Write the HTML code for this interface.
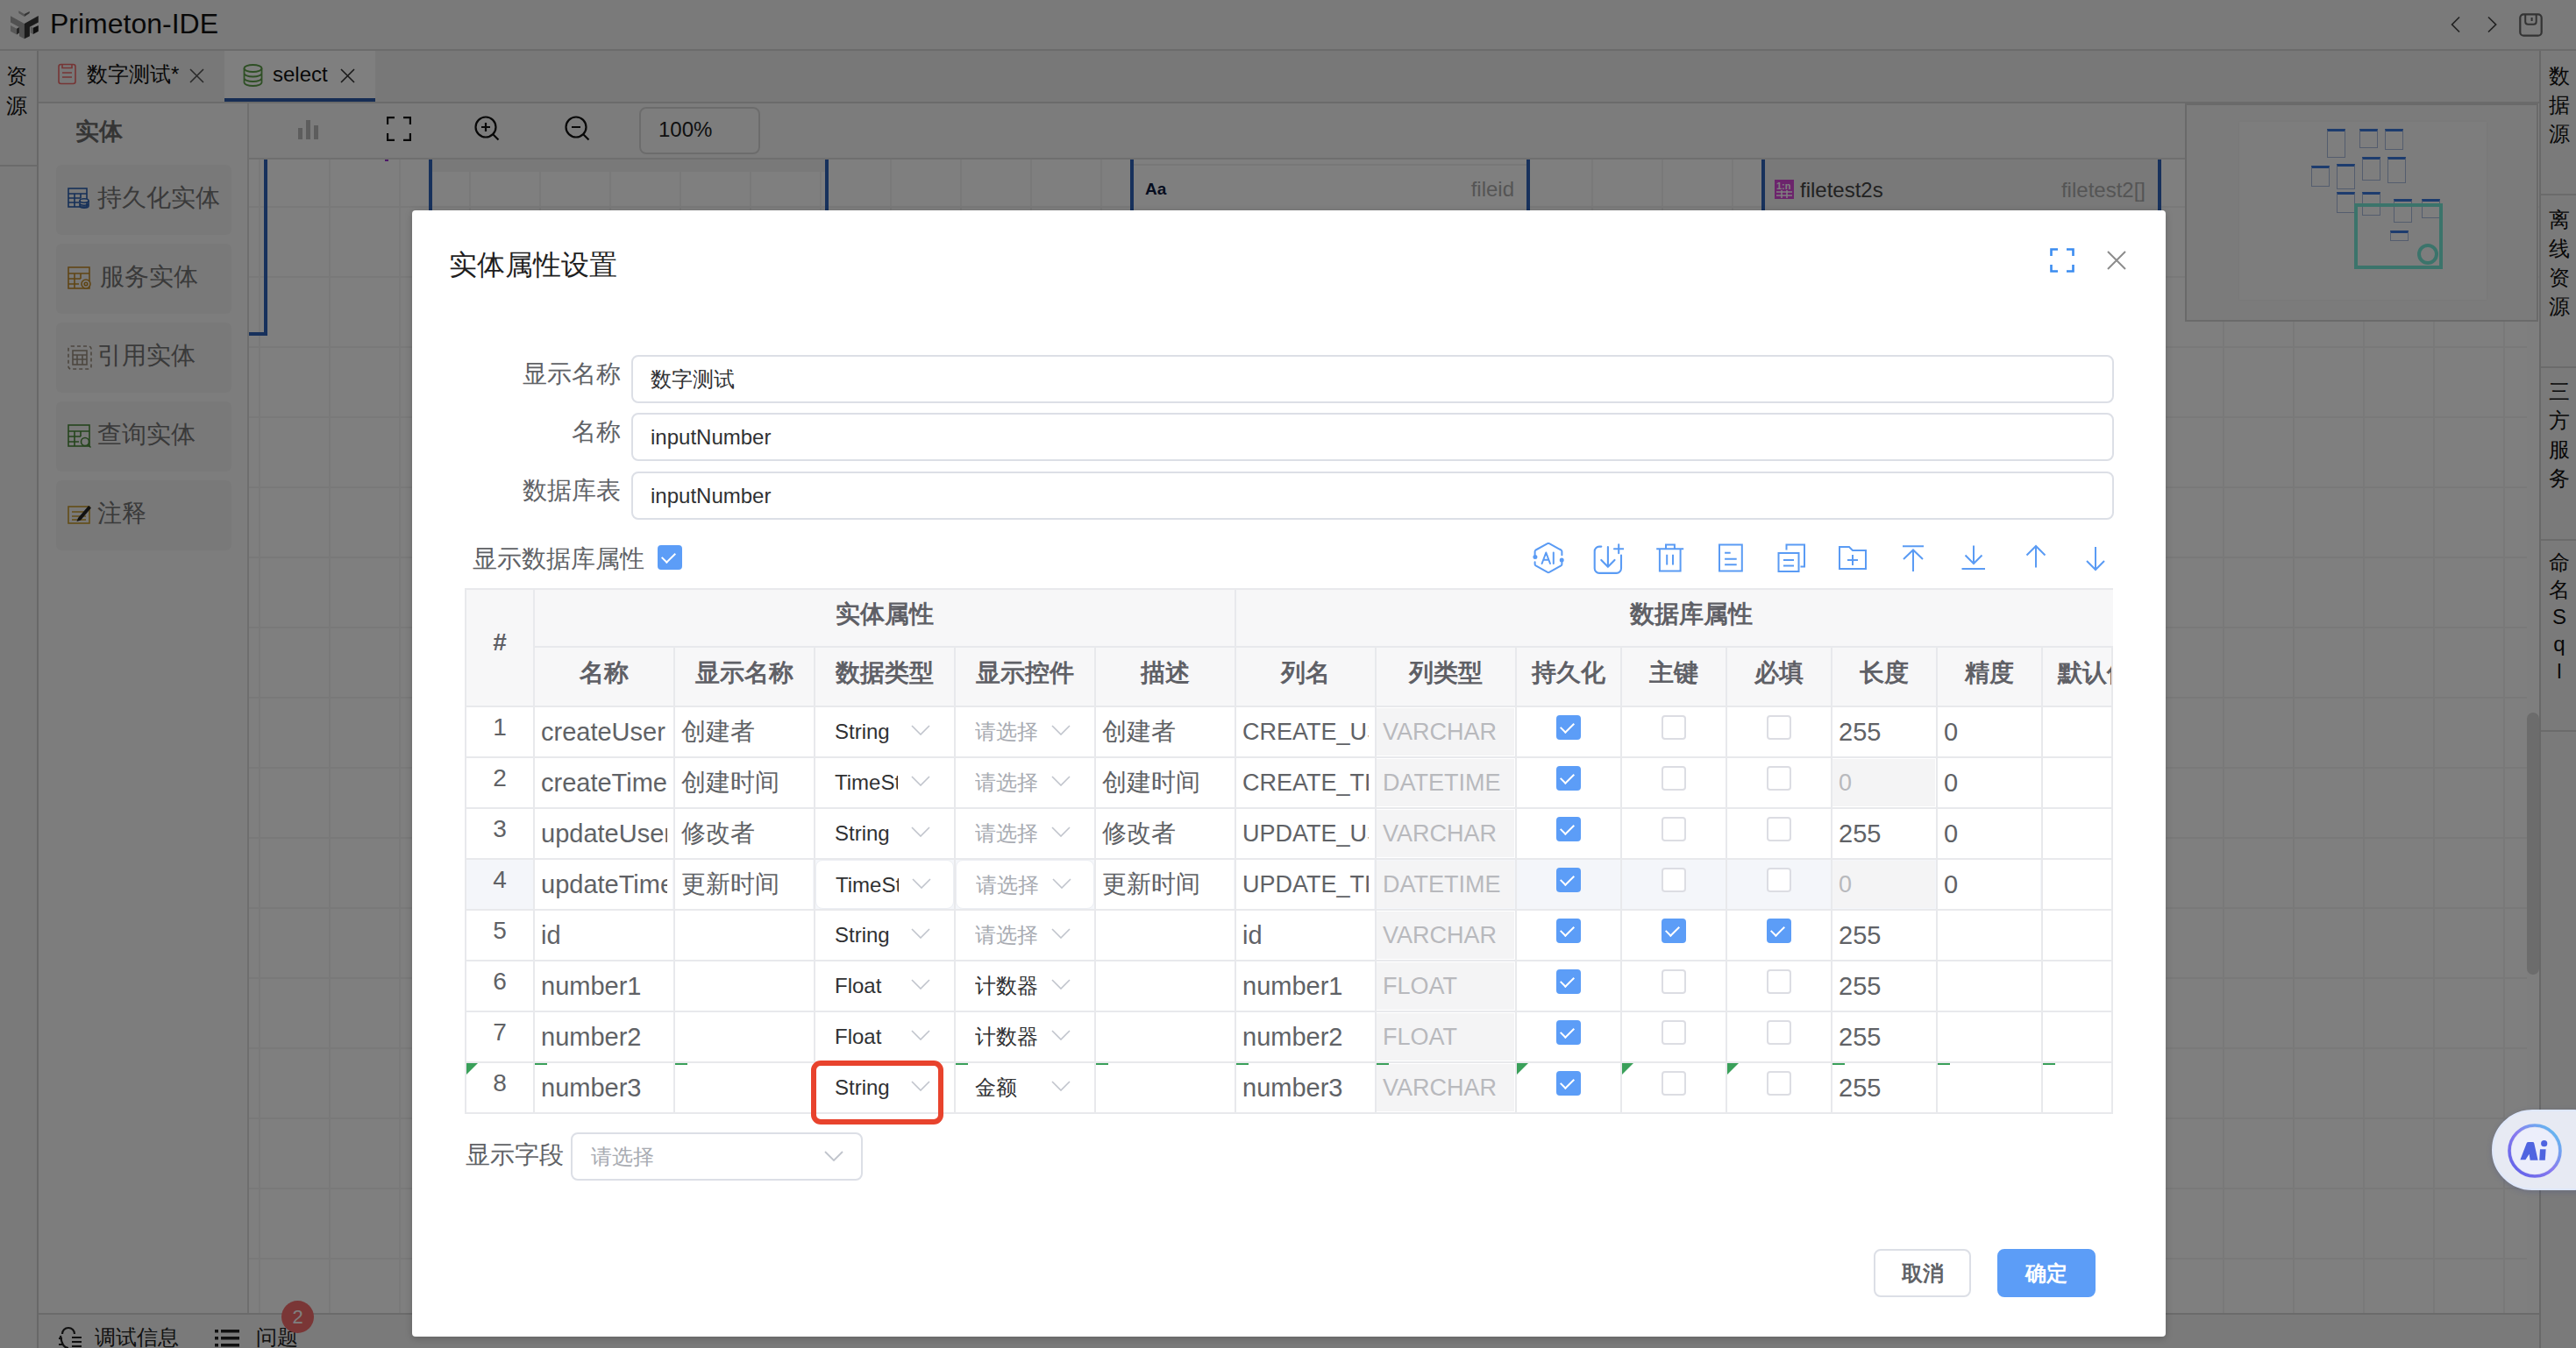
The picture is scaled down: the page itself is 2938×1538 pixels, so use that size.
<!DOCTYPE html>
<html><head><meta charset="utf-8">
<style>
*{box-sizing:border-box;margin:0;padding:0}
html,body{width:2938px;height:1538px;overflow:hidden;background:#fff;font-family:"Liberation Sans",sans-serif;color:#333}
.a{position:absolute}
#bg{position:absolute;left:0;top:0;width:2938px;height:1538px;overflow:hidden}
#topbar{left:0;top:0;width:2938px;height:58px;background:#f4f4f4;border-bottom:2px solid #d6d6d6}
#lstrip{left:0;top:58px;width:44px;height:1480px;background:#f4f4f4;border-right:2px solid #d0d0d0}
#rstrip{left:2896px;top:58px;width:42px;height:1480px;background:#f4f4f4;border-left:2px solid #d0d0d0}
#tabbar{left:44px;top:58px;width:2852px;height:60px;background:#f0f0f0;border-bottom:2px solid #d6d6d6}
#lpanel{left:44px;top:118px;width:240px;height:1380px;background:#fbfbfb;border-right:2px solid #dcdcdc}
#toolbar{left:284px;top:118px;width:2208px;height:64px;background:#f9f9f9;border-bottom:2px solid #dedede}
#canvas{left:284px;top:182px;width:2612px;height:1316px;background-color:#fff;
 background-image:linear-gradient(to right,#f3f3f3 2px,transparent 2px),linear-gradient(to bottom,#f3f3f3 2px,transparent 2px);
 background-size:80px 80px;background-position:11px 53px}
#botbar{left:44px;top:1498px;width:2852px;height:40px;background:#f4f4f4;border-top:2px solid #d6d6d6}
#mask{position:absolute;left:0;top:0;width:2938px;height:1538px;background:rgba(0,0,0,0.5)}
#modal{left:470px;top:240px;width:2000px;height:1285px;background:#fff;border-radius:4px;box-shadow:0 2px 8px rgba(0,0,0,0.2)}
.item{left:20px;width:200px;height:80px;border-radius:6px;background:#f3f3f3;font-size:28px;color:#747474;line-height:32px}
.item span{white-space:nowrap}
.flab{font-size:28px;line-height:40px;color:#606266;text-align:right;white-space:nowrap}
.flab2{font-size:28px;line-height:36px;color:#606266;white-space:nowrap}
.finp{height:55px;border:2px solid #dcdfe6;border-radius:8px;background:#fff;font-size:24px;line-height:51px;color:#303133;padding-left:20px;white-space:nowrap}
.cb{width:28px;height:28px;border:2px solid #dcdde3;border-radius:4px;background:#fff}
.cb.on{background:#5c9df7;border-color:#5c9df7}
.cb.on::after{content:"";position:absolute;left:6px;top:3px;width:7px;height:13px;border-right:2.5px solid #fff;border-bottom:2.5px solid #fff;transform:rotate(45deg)}
#tbl{overflow:hidden}
.gl{background:#e8e9ec}
.hd{font-size:28px;font-weight:bold;color:#5f6066;text-align:center;white-space:nowrap;overflow:hidden}
.num{height:56px;line-height:46px;font-size:28px;color:#606266;text-align:center}
.ctext{height:56px;line-height:56px;font-size:28px;color:#606266;white-space:nowrap;overflow:hidden}
.csel{width:158px;height:56px}
.csel.hov{background:#fff;border:1px solid #eceef3;border-radius:8px}
.csel .st{position:absolute;left:22px;top:0;width:72px;height:56px;line-height:56px;font-size:24px;color:#303133;white-space:nowrap;overflow:hidden}
.csel .st.ph{color:#a8abb2;width:90px}
.csel .arr{position:absolute;left:109px;top:20px}
.cdis{background:#f4f4f5;font-size:27px;line-height:54px;color:#b8b9bd;padding-left:7px;white-space:nowrap;overflow:hidden}
.tri{width:0;height:0;border-top:13px solid #3aa05a;border-right:13px solid transparent}
.fsel{width:333px;height:55px;border:2px solid #dcdfe6;border-radius:8px;background:#fff;font-size:24px;line-height:51px;color:#a8abb2;padding-left:21px}
.btn{width:111px;height:55px;border:2px solid #dcdfe6;border-radius:8px;background:#fff;font-size:24px;line-height:51px;color:#606266;text-align:center;font-weight:bold}
.btn.pri{width:112px;background:#5c9df7;border-color:#5c9df7;color:#fff}
</style></head><body>
<div id="bg">
 <div class="a" id="canvas">
  <!-- entity boxes on canvas (partially visible) -->
  <div class="a" style="left:0;top:0;width:21px;height:201px;border-right:4px solid #2f62b8;border-bottom:4px solid #2f62b8"></div>
  <div class="a" style="left:155px;top:-1px;width:4px;height:3px;background:#9b30d0"></div>
  <div class="a" style="left:205px;top:-1px;width:456px;height:80px;border-left:4px solid #2f62b8;border-right:4px solid #2f62b8;"><div class="a" style="left:0;top:0;width:448px;height:15px;background:#f3f3f3"></div></div>
  <div class="a" style="left:1005px;top:-1px;width:456px;height:80px;border-left:4px solid #2f62b8;border-right:4px solid #2f62b8;background:#fff">
   <div class="a" style="left:0;top:6px;width:448px;height:2px;background:#eee"></div>
   <div class="a" style="left:13px;top:24px;font-size:19px;font-weight:bold;color:#0d1a40">Aa</div>
   <div class="a" style="right:14px;top:21px;font-size:24px;color:#aaa">fileid</div>
  </div>
  <div class="a" style="left:1725px;top:-1px;width:456px;height:80px;border-left:4px solid #2f62b8;border-right:4px solid #2f62b8;background:#f3f3f3">
   <svg class="a" style="left:11px;top:24px" width="22" height="22" viewBox="0 0 22 22"><rect x="0" y="0" width="22" height="22" fill="#d848d8"/><text x="2" y="11" font-size="11" fill="#fff" font-family="Liberation Sans" font-weight="bold">1:n</text><path d="M2 14h18M2 18h18M8 12v9M14 12v9" stroke="#fff" stroke-width="1.5"/></svg>
   <div class="a" style="left:40px;top:22px;font-size:24px;color:#444">filetest2s</div>
   <div class="a" style="right:14px;top:22px;font-size:24px;color:#aaa">filetest2[]</div>
  </div>
 </div>
 <div class="a" id="topbar">
  <svg class="a" style="left:0;top:0" width="50" height="50" viewBox="0 0 50 50">
   <polygon points="21.3,12.2 27.8,16.1 27.8,19.1 21.3,15" fill="#a8a8a8"/>
   <polygon points="27.8,16.1 33.7,13 33.7,15 27.8,19.1" fill="#6a6a6a"/>
   <polygon points="12,18.2 27.8,26.9 27.8,44.3 22,41.2 22,31 12,25.6" fill="#a2a2a2"/>
   <polygon points="12,29.1 19.1,32.8 19.1,39.5 12,35.8" fill="#b0b0b0"/>
   <polygon points="19.1,32.8 21.9,31.1 21.9,37.6 19.1,39.5" fill="#404040"/>
   <polygon points="27.8,26.9 43.8,18 43.8,25.6 33.9,30.8 33.9,41.2 27.8,44.3" fill="#363636"/>
   <polygon points="34.7,30.6 37.8,31.7 37.8,38.9 34.7,37.6" fill="#b0b0b0"/>
   <polygon points="37.8,31.7 43.8,29.1 43.8,35.8 37.8,38.9" fill="#202020"/>
  </svg>
  <div class="a" style="left:57px;top:9px;font-size:32px;color:#111;line-height:36px">Primeton-IDE</div>
  <svg class="a" style="left:2792px;top:15px" width="20" height="28" viewBox="0 0 20 28"><path d="M13 4.5L4.6 13 13 21.5" fill="none" stroke="#444" stroke-width="1.7"/></svg>
  <svg class="a" style="left:2832px;top:15px" width="20" height="28" viewBox="0 0 20 28"><path d="M6 4.5L14.6 13 6 21.5" fill="none" stroke="#444" stroke-width="1.7"/></svg>
  <svg class="a" style="left:2871px;top:13px" width="30" height="30" viewBox="0 0 30 30"><rect x="3.3" y="3.3" width="24.4" height="24.4" rx="4" fill="none" stroke="#666" stroke-width="2.2"/><path d="M9.2 3.3v8.5a3 3 0 0 0 3 3h6.5a3 3 0 0 0 3-3V3.3M16.6 7v4" fill="none" stroke="#666" stroke-width="2"/></svg>
 </div>
 <div class="a" id="lstrip">
  <div class="a" style="left:7px;top:12px;width:24px;font-size:24px;line-height:34px;color:#111">资<br>源</div>
  <div class="a" style="left:0;top:130px;width:42px;height:2px;background:#d6d6d6"></div>
 </div>
 <div class="a" id="rstrip">
  <div class="a" style="left:8px;top:12px;width:26px;font-size:24px;line-height:33px;color:#111;text-align:center">数<br>据<br>源</div>
  <div class="a" style="left:0;top:163px;width:40px;height:2px;background:#d6d6d6"></div>
  <div class="a" style="left:8px;top:176px;width:26px;font-size:24px;line-height:33px;color:#111;text-align:center">离<br>线<br>资<br>源</div>
  <div class="a" style="left:0;top:360px;width:40px;height:2px;background:#d6d6d6"></div>
  <div class="a" style="left:8px;top:372px;width:26px;font-size:24px;line-height:33px;color:#111;text-align:center">三<br>方<br>服<br>务</div>
  <div class="a" style="left:0;top:557px;width:40px;height:2px;background:#d6d6d6"></div>
  <div class="a" style="left:8px;top:568px;width:26px;font-size:24px;line-height:31px;color:#111;text-align:center">命<br>名<br>S<br>q<br>l</div>
  <div class="a" style="left:0;top:775px;width:40px;height:2px;background:#d6d6d6"></div>
 </div>
 <div class="a" id="tabbar">
  <div class="a" style="left:212px;top:0;width:172px;height:58px;background:#fff"></div>
  <div class="a" style="left:212px;top:54px;width:172px;height:4px;background:#2d5ba8"></div>
  <svg class="a" style="left:22px;top:14px" width="21" height="25" viewBox="0 0 21 25"><rect x="1" y="1.5" width="19" height="22" rx="2.5" fill="none" stroke="#ec6a6a" stroke-width="1.6"/><path d="M5 1.5v4h11v-4M5 11h11M5 16h11" fill="none" stroke="#ec6a6a" stroke-width="1.6"/></svg>
  <div class="a" style="left:55px;top:13px;font-size:24px;line-height:28px;color:#111">数字测试*</div>
  <svg class="a" style="left:172px;top:20px" width="17" height="17" viewBox="0 0 17 17"><path d="M1 1l15 15M16 1L1 16" stroke="#555" stroke-width="1.6"/></svg>
  <svg class="a" style="left:233px;top:15px" width="23" height="26" viewBox="0 0 23 26"><ellipse cx="11.5" cy="5" rx="10" ry="4" fill="none" stroke="#5c9e48" stroke-width="1.8"/><path d="M1.5 5v16c0 2.2 4.5 4 10 4s10-1.8 10-4V5M1.5 10.5c0 2.2 4.5 4 10 4s10-1.8 10-4M1.5 16c0 2.2 4.5 4 10 4s10-1.8 10-4" fill="none" stroke="#5c9e48" stroke-width="1.8"/></svg>
  <div class="a" style="left:267px;top:13px;font-size:24px;line-height:28px;color:#111">select</div>
  <svg class="a" style="left:344px;top:20px" width="17" height="17" viewBox="0 0 17 17"><path d="M1 1l15 15M16 1L1 16" stroke="#333" stroke-width="1.6"/></svg>
 </div>
 <div class="a" id="lpanel">
  <div class="a" style="left:42px;top:16px;font-size:27px;font-weight:bold;color:#6a6a6a;line-height:32px">实体</div>
  <div class="a item" style="top:70px"><svg class="a" style="left:13px;top:26px" width="25" height="25" viewBox="0 0 25 25"><g fill="none" stroke="#2b5fb0" stroke-width="1.6"><rect x="1" y="1" width="21" height="21"/><path d="M1 7h21M1 12h14M1 17h12M8 7v15M15 7v5"/><ellipse cx="19" cy="15" rx="5" ry="2.2" fill="#f5f5f5"/><path d="M14 15v6c0 1.2 2.2 2.2 5 2.2s5-1 5-2.2v-6M14 18c0 1.2 2.2 2.2 5 2.2s5-1 5-2.2"/></g></svg><span class="a" style="left:47px;top:22px">持久化实体</span></div>
  <div class="a item" style="top:160px"><svg class="a" style="left:13px;top:26px" width="28" height="28" viewBox="0 0 28 28"><g fill="none" stroke="#c08a2a" stroke-width="1.6"><rect x="1" y="1" width="24" height="24"/><path d="M1 8h24M1 14h14M1 20h12M8 8v17M15 8v6"/><circle cx="21" cy="20" r="5" fill="#f5f5f5"/><circle cx="21" cy="20" r="1.8"/></g></svg><span class="a" style="left:50px;top:22px">服务实体</span></div>
  <div class="a item" style="top:250px"><svg class="a" style="left:13px;top:26px" width="28" height="28" viewBox="0 0 28 28"><g fill="none" stroke="#9a8f80" stroke-width="1.6"><rect x="1" y="1" width="26" height="26" rx="3" stroke-dasharray="4 3"/><rect x="6" y="6" width="16" height="16"/><path d="M6 11h16M6 16h16M11 11v11M17 11v11"/></g></svg><span class="a" style="left:47px;top:22px">引用实体</span></div>
  <div class="a item" style="top:340px"><svg class="a" style="left:13px;top:26px" width="28" height="28" viewBox="0 0 28 28"><g fill="none" stroke="#4a8a3a" stroke-width="1.6"><rect x="1" y="1" width="24" height="24"/><path d="M1 8h24M1 14h14M1 20h12M8 8v17M15 8v6"/><circle cx="20" cy="20" r="4.5" fill="#f5f5f5"/><path d="M23 23l3.5 3.5"/></g></svg><span class="a" style="left:47px;top:22px">查询实体</span></div>
  <div class="a item" style="top:430px"><svg class="a" style="left:13px;top:24px" width="28" height="28" viewBox="0 0 28 28"><g fill="none" stroke="#c69a2e" stroke-width="1.6"><rect x="1" y="6" width="24" height="19"/><path d="M5 12h14M5 17h16M5 21h16"/></g><path d="M12 19l12-14 3 2.5-12 14-4.5 1.5z" fill="#222"/></svg><span class="a" style="left:47px;top:22px">注释</span></div>
 </div>
 <div class="a" id="toolbar">
  <svg class="a" style="left:56px;top:18px" width="24" height="24" viewBox="0 0 24 24"><rect x="0" y="10" width="5" height="13" fill="#bbb"/><rect x="9" y="1" width="5" height="22" fill="#bbb"/><rect x="18" y="7" width="5" height="16" fill="#bbb"/></svg>
  <svg class="a" style="left:157px;top:15px" width="28" height="28" viewBox="0 0 28 28"><path d="M1 9V1h8M19 1h8v8M27 19v8h-8M9 27H1v-8" fill="none" stroke="#111" stroke-width="2.4"/></svg>
  <svg class="a" style="left:257px;top:14px" width="30" height="30" viewBox="0 0 30 30"><circle cx="13" cy="13" r="11.5" fill="none" stroke="#111" stroke-width="2.2"/><path d="M13 8v10M8 13h10M21.5 21.5l6 6" stroke="#111" stroke-width="2.2"/></svg>
  <svg class="a" style="left:360px;top:14px" width="30" height="30" viewBox="0 0 30 30"><circle cx="13" cy="13" r="11.5" fill="none" stroke="#111" stroke-width="2.2"/><path d="M8 13h10M21.5 21.5l6 6" stroke="#111" stroke-width="2.2"/></svg>
  <div class="a" style="left:445px;top:4px;width:138px;height:54px;border:2px solid #d9d9d9;border-radius:8px;background:#fbfbfb"></div>
  <div class="a" style="left:467px;top:16px;font-size:24px;color:#222;line-height:28px">100%</div>
 </div>
 <div class="a" id="minimap" style="left:2492px;top:118px;width:403px;height:249px;background:#f7f7f7;border:2px solid #d4d4d4"><div class="a" style="left:60px;top:19px;width:282px;height:203px;background:#fbfbfb;box-shadow:0 0 3px rgba(0,0,0,0.06)"></div><div class="a" style="left:160px;top:27px;width:21px;height:33px;border:1px solid #a9bbdc;border-top:3px solid #3a78dc;background:#fdfdfd"></div><div class="a" style="left:197px;top:27px;width:21px;height:22px;border:1px solid #a9bbdc;border-top:3px solid #3a78dc;background:#fdfdfd"></div><div class="a" style="left:226px;top:27px;width:21px;height:24px;border:1px solid #a9bbdc;border-top:3px solid #3a78dc;background:#fdfdfd"></div><div class="a" style="left:142px;top:69px;width:21px;height:24px;border:1px solid #a9bbdc;border-top:3px solid #3a78dc;background:#fdfdfd"></div><div class="a" style="left:171px;top:67px;width:21px;height:29px;border:1px solid #a9bbdc;border-top:3px solid #3a78dc;background:#fdfdfd"></div><div class="a" style="left:200px;top:59px;width:21px;height:27px;border:1px solid #a9bbdc;border-top:3px solid #3a78dc;background:#fdfdfd"></div><div class="a" style="left:229px;top:59px;width:21px;height:30px;border:1px solid #a9bbdc;border-top:3px solid #3a78dc;background:#fdfdfd"></div><div class="a" style="left:171px;top:99px;width:21px;height:24px;border:1px solid #a9bbdc;border-top:3px solid #3a78dc;background:#fdfdfd"></div><div class="a" style="left:200px;top:99px;width:21px;height:27px;border:1px solid #a9bbdc;border-top:3px solid #3a78dc;background:#fdfdfd"></div><div class="a" style="left:236px;top:107px;width:21px;height:27px;border:1px solid #a9bbdc;border-top:3px solid #3a78dc;background:#fdfdfd"></div><div class="a" style="left:268px;top:107px;width:21px;height:22px;border:1px solid #a9bbdc;border-top:3px solid #3a78dc;background:#fdfdfd"></div><div class="a" style="left:232px;top:143px;width:21px;height:12px;border:1px solid #a9bbdc;border-top:3px solid #3a78dc;background:#fdfdfd"></div><div class="a" style="left:191px;top:112px;width:101px;height:75px;border:4px solid #76e8d6"></div><div class="a" style="left:263px;top:158px;width:24px;height:24px;border:4px solid #76e8d6;border-radius:50%"></div></div>
 <div class="a" style="left:2882px;top:367px;width:14px;height:1131px;background:#fdfdfd"></div><div class="a" id="scroll" style="left:2882px;top:813px;width:14px;height:299px;border-radius:7px;background:#d8d8d8"></div>
 <div class="a" id="botbar">
  <svg class="a" style="left:21px;top:12px" width="30" height="30" viewBox="0 0 30 30"><g fill="none" stroke="#222" stroke-width="2.2"><path d="M6 10c0-4 3-7 7-7s7 3 7 7"/><path d="M4 12c1 8 4 14 9 14M2 15h4M2 22h5"/><path d="M17 14h11M17 19h11M17 24h11"/></g></svg>
  <div class="a" style="left:64px;top:12px;font-size:24px;color:#222;line-height:28px">调试信息</div>
  <svg class="a" style="left:201px;top:15px" width="28" height="24" viewBox="0 0 28 24"><g fill="#222"><rect x="0" y="2" width="4" height="3.5"/><rect x="7" y="2" width="21" height="3.5"/><rect x="0" y="10" width="4" height="3.5"/><rect x="7" y="10" width="21" height="3.5"/><rect x="0" y="18" width="4" height="3.5"/><rect x="7" y="18" width="21" height="3.5"/></g></svg>
  <div class="a" style="left:248px;top:12px;font-size:24px;color:#222;line-height:28px">问题</div>
  <div class="a" style="left:277px;top:-16px;width:37px;height:37px;border-radius:50%;background:#f56c6c;color:#fff;font-size:22px;line-height:37px;text-align:center">2</div>
 </div>
</div>
<div id="mask"></div>
<div class="a" id="modal">
<div class="a" style="left:42px;top:42px;font-size:32px;line-height:40px;color:#1f1f1f">实体属性设置</div>
<svg class="a" style="left:1868px;top:43px" width="28" height="28" viewBox="0 0 28 28"><path d="M1.5 9V1.5H9M19 1.5h7.5V9M26.5 19v7.5H19M9 26.5H1.5V19" fill="none" stroke="#3b8cf0" stroke-width="2.6"/></svg>
<svg class="a" style="left:1933px;top:46px" width="22" height="22" viewBox="0 0 22 22"><path d="M1 1l20 20M21 1L1 21" stroke="#8c8c8c" stroke-width="2"/></svg>
<div class="a flab" style="left:0;width:238px;top:167px">显示名称</div>
<div class="a finp" style="left:250px;top:165px;width:1691px"><span>数字测试</span></div>
<div class="a flab" style="left:0;width:238px;top:233px">名称</div>
<div class="a finp" style="left:250px;top:231px;width:1691px"><span>inputNumber</span></div>
<div class="a flab" style="left:0;width:238px;top:300px">数据库表</div>
<div class="a finp" style="left:250px;top:298px;width:1691px"><span>inputNumber</span></div>
<div class="a flab2" style="left:69px;top:380px">显示数据库属性</div>
<div class="a cb on" style="left:280px;top:382px"></div>
<svg class="a" style="left:1278px;top:379px" width="36" height="36" viewBox="0 0 36 36"><g fill="none" stroke="#5a9bf4" stroke-width="2" stroke-linecap="round" stroke-linejoin="round"><path d="M2.6 14.2V10.2Q2.6 9.1 3.6 8.5L17 1.2Q18 0.7 19 1.2L32.4 8.5Q33.4 9.1 33.4 10.2V14.2M2.6 22.3V24.8Q2.6 25.8 3.6 26.4L17 33.9Q18 34.4 19 33.9L32.4 26.4Q33.4 25.8 33.4 24.8V20"/><path d="M10.6 24L15.3 11.5 20 24M12.3 19.8H18.3M23.8 11.5V24"/></g><circle cx="2.9" cy="16.4" r="2.5" fill="#5a9bf4"/><circle cx="33.2" cy="20" r="2.5" fill="#5a9bf4"/></svg>
<svg class="a" style="left:1346px;top:379px" width="36" height="36" viewBox="0 0 36 36"><g fill="none" stroke="#5a9bf4" stroke-width="2.1" stroke-linecap="round"><path d="M10.3 4.6H8a5.3 5.3 0 0 0-5.3 5.3V29.6a5.3 5.3 0 0 0 5.3 5.3H27.7a5.3 5.3 0 0 0 5.3-5.3V14.6"/><path d="M17.9 5.1V27.8M10.3 19.9l7.6 7.9 7.6-7.9M30.2 2.2v10M25 7.2h10.5"/></g></svg>
<svg class="a" style="left:1417px;top:379px" width="36" height="36" viewBox="0 0 36 36"><path d="M2.2 7.3h31M13 7.3V2.6h9.9v4.7M5.9 7.3v25.1h23.7V7.3M14.2 13.7v11.8M21 13.7v11.8" fill="none" stroke="#5a9bf4" stroke-width="2"/></svg>
<svg class="a" style="left:1486px;top:379px" width="36" height="36" viewBox="0 0 36 36"><path d="M5 2.6h25.8v29.8H5z" fill="none" stroke="#5a9bf4" stroke-width="2"/><path d="M11.1 11.7h6.6M11.1 18.7h13.6M11.1 25.3h13.6" fill="none" stroke="#5a9bf4" stroke-width="2"/></svg>
<svg class="a" style="left:1555px;top:379px" width="36" height="36" viewBox="0 0 36 36"><path d="M12.5 8.5V2.5h20.5v25h-4.5" fill="none" stroke="#5a9bf4" stroke-width="2"/><path d="M3.5 12h23v21h-23z" fill="none" stroke="#5a9bf4" stroke-width="2"/><path d="M9 20h12M9 26.5h12" fill="none" stroke="#5a9bf4" stroke-width="2"/></svg>
<svg class="a" style="left:1625px;top:379px" width="36" height="36" viewBox="0 0 36 36"><path d="M3 5h11l4 4h15v21H3z" fill="none" stroke="#5a9bf4" stroke-width="2"/><path d="M18 14v12M12 20h12" fill="none" stroke="#5a9bf4" stroke-width="2"/></svg>
<svg class="a" style="left:1694px;top:379px" width="36" height="36" viewBox="0 0 36 36"><path d="M6 4.2h24M18 33V8.5M7 19l11-10.5 11 10.5" fill="none" stroke="#5a9bf4" stroke-width="2"/></svg>
<svg class="a" style="left:1763px;top:379px" width="36" height="36" viewBox="0 0 36 36"><path d="M4.5 30h26.5M18 3.5v20M8.5 14.5l9.5 9.5 9.5-9.5" fill="none" stroke="#5a9bf4" stroke-width="2"/></svg>
<svg class="a" style="left:1834px;top:379px" width="36" height="36" viewBox="0 0 36 36"><path d="M18 28.5V4M7.5 14.5L18 4l10.5 10.5" fill="none" stroke="#5a9bf4" stroke-width="2"/></svg>
<svg class="a" style="left:1902px;top:379px" width="36" height="36" viewBox="0 0 36 36"><path d="M18 5v26M8 21l10 10 10-10" fill="none" stroke="#5a9bf4" stroke-width="2"/></svg>
<div class="a" id="tbl" style="left:60px;top:431px;width:1880px;height:600px">
<div class="a" style="left:0;top:0;width:1880px;height:134px;background:#f7f7f8"></div>
<div class="a" style="left:0;top:308px;width:1880px;height:58px;background:#f4f6fa"></div>
<div class="a num" style="left:2px;top:136px;width:76px">1</div>
<div class="a ctext" style="left:87px;top:136px;width:144px;font-size:29px">createUser</div>
<div class="a ctext" style="left:247px;top:136px;width:144px">创建者</div>
<div class="a ctext" style="left:727px;top:136px;width:144px">创建者</div>
<div class="a ctext" style="left:887px;top:136px;width:144px;font-size:27px">CREATE_USER</div>
<div class="a csel" style="left:400px;top:136px"><div class="st">String</div><svg class="arr" width="22" height="12" viewBox="0 0 22 12"><path d="M1 1l10 10 10-10" fill="none" stroke="#c0c4cc" stroke-width="1.6"/></svg></div>
<div class="a csel" style="left:560px;top:136px"><div class="st ph">请选择</div><svg class="arr" width="22" height="12" viewBox="0 0 22 12"><path d="M1 1l10 10 10-10" fill="none" stroke="#c0c4cc" stroke-width="1.6"/></svg></div>
<div class="a cdis" style="left:1040px;top:137px;width:157px;height:54px"><span>VARCHAR</span></div>
<div class="a cb on" style="left:1245px;top:145px"></div>
<div class="a cb" style="left:1365px;top:145px"></div>
<div class="a cb" style="left:1485px;top:145px"></div>
<div class="a ctext" style="left:1567px;top:136px;width:104px;font-size:29px">255</div>
<div class="a ctext" style="left:1687px;top:136px;width:104px;font-size:29px">0</div>
<div class="a num" style="left:2px;top:194px;width:76px">2</div>
<div class="a ctext" style="left:87px;top:194px;width:144px;font-size:29px">createTime</div>
<div class="a ctext" style="left:247px;top:194px;width:144px">创建时间</div>
<div class="a ctext" style="left:727px;top:194px;width:144px">创建时间</div>
<div class="a ctext" style="left:887px;top:194px;width:144px;font-size:27px">CREATE_TIME</div>
<div class="a csel" style="left:400px;top:194px"><div class="st">TimeStamp</div><svg class="arr" width="22" height="12" viewBox="0 0 22 12"><path d="M1 1l10 10 10-10" fill="none" stroke="#c0c4cc" stroke-width="1.6"/></svg></div>
<div class="a csel" style="left:560px;top:194px"><div class="st ph">请选择</div><svg class="arr" width="22" height="12" viewBox="0 0 22 12"><path d="M1 1l10 10 10-10" fill="none" stroke="#c0c4cc" stroke-width="1.6"/></svg></div>
<div class="a cdis" style="left:1040px;top:195px;width:157px;height:54px"><span>DATETIME</span></div>
<div class="a cb on" style="left:1245px;top:203px"></div>
<div class="a cb" style="left:1365px;top:203px"></div>
<div class="a cb" style="left:1485px;top:203px"></div>
<div class="a cdis" style="left:1560px;top:195px;width:117px;height:54px"><span>0</span></div>
<div class="a ctext" style="left:1687px;top:194px;width:104px;font-size:29px">0</div>
<div class="a num" style="left:2px;top:252px;width:76px">3</div>
<div class="a ctext" style="left:87px;top:252px;width:144px;font-size:29px">updateUser</div>
<div class="a ctext" style="left:247px;top:252px;width:144px">修改者</div>
<div class="a ctext" style="left:727px;top:252px;width:144px">修改者</div>
<div class="a ctext" style="left:887px;top:252px;width:144px;font-size:27px">UPDATE_USER</div>
<div class="a csel" style="left:400px;top:252px"><div class="st">String</div><svg class="arr" width="22" height="12" viewBox="0 0 22 12"><path d="M1 1l10 10 10-10" fill="none" stroke="#c0c4cc" stroke-width="1.6"/></svg></div>
<div class="a csel" style="left:560px;top:252px"><div class="st ph">请选择</div><svg class="arr" width="22" height="12" viewBox="0 0 22 12"><path d="M1 1l10 10 10-10" fill="none" stroke="#c0c4cc" stroke-width="1.6"/></svg></div>
<div class="a cdis" style="left:1040px;top:253px;width:157px;height:54px"><span>VARCHAR</span></div>
<div class="a cb on" style="left:1245px;top:261px"></div>
<div class="a cb" style="left:1365px;top:261px"></div>
<div class="a cb" style="left:1485px;top:261px"></div>
<div class="a ctext" style="left:1567px;top:252px;width:104px;font-size:29px">255</div>
<div class="a ctext" style="left:1687px;top:252px;width:104px;font-size:29px">0</div>
<div class="a num" style="left:2px;top:310px;width:76px">4</div>
<div class="a" style="left:80px;top:310px;width:157px;height:56px;background:#fff"></div>
<div class="a" style="left:240px;top:310px;width:157px;height:56px;background:#fff"></div>
<div class="a" style="left:720px;top:310px;width:157px;height:56px;background:#fff"></div>
<div class="a" style="left:880px;top:310px;width:157px;height:56px;background:#fff"></div>
<div class="a" style="left:1680px;top:310px;width:117px;height:56px;background:#fff"></div>
<div class="a" style="left:1800px;top:310px;width:120px;height:56px;background:#fff"></div>
<div class="a ctext" style="left:87px;top:310px;width:144px;font-size:29px">updateTime</div>
<div class="a ctext" style="left:247px;top:310px;width:144px">更新时间</div>
<div class="a ctext" style="left:727px;top:310px;width:144px">更新时间</div>
<div class="a ctext" style="left:887px;top:310px;width:144px;font-size:27px">UPDATE_TIME</div>
<div class="a csel hov" style="left:400px;top:310px"><div class="st">TimeStamp</div><svg class="arr" width="22" height="12" viewBox="0 0 22 12"><path d="M1 1l10 10 10-10" fill="none" stroke="#c0c4cc" stroke-width="1.6"/></svg></div>
<div class="a csel hov" style="left:560px;top:310px"><div class="st ph">请选择</div><svg class="arr" width="22" height="12" viewBox="0 0 22 12"><path d="M1 1l10 10 10-10" fill="none" stroke="#c0c4cc" stroke-width="1.6"/></svg></div>
<div class="a cdis" style="left:1040px;top:311px;width:157px;height:54px"><span>DATETIME</span></div>
<div class="a cb on" style="left:1245px;top:319px"></div>
<div class="a cb" style="left:1365px;top:319px"></div>
<div class="a cb" style="left:1485px;top:319px"></div>
<div class="a cdis" style="left:1560px;top:311px;width:117px;height:54px"><span>0</span></div>
<div class="a ctext" style="left:1687px;top:310px;width:104px;font-size:29px">0</div>
<div class="a num" style="left:2px;top:368px;width:76px">5</div>
<div class="a ctext" style="left:87px;top:368px;width:144px;font-size:29px">id</div>
<div class="a ctext" style="left:247px;top:368px;width:144px;font-size:27px"></div>
<div class="a ctext" style="left:727px;top:368px;width:144px;font-size:27px"></div>
<div class="a ctext" style="left:887px;top:368px;width:144px;font-size:29px">id</div>
<div class="a csel" style="left:400px;top:368px"><div class="st">String</div><svg class="arr" width="22" height="12" viewBox="0 0 22 12"><path d="M1 1l10 10 10-10" fill="none" stroke="#c0c4cc" stroke-width="1.6"/></svg></div>
<div class="a csel" style="left:560px;top:368px"><div class="st ph">请选择</div><svg class="arr" width="22" height="12" viewBox="0 0 22 12"><path d="M1 1l10 10 10-10" fill="none" stroke="#c0c4cc" stroke-width="1.6"/></svg></div>
<div class="a cdis" style="left:1040px;top:369px;width:157px;height:54px"><span>VARCHAR</span></div>
<div class="a cb on" style="left:1245px;top:377px"></div>
<div class="a cb on" style="left:1365px;top:377px"></div>
<div class="a cb on" style="left:1485px;top:377px"></div>
<div class="a ctext" style="left:1567px;top:368px;width:104px;font-size:29px">255</div>
<div class="a ctext" style="left:1687px;top:368px;width:104px;font-size:29px"></div>
<div class="a num" style="left:2px;top:426px;width:76px">6</div>
<div class="a ctext" style="left:87px;top:426px;width:144px;font-size:29px">number1</div>
<div class="a ctext" style="left:247px;top:426px;width:144px;font-size:27px"></div>
<div class="a ctext" style="left:727px;top:426px;width:144px;font-size:27px"></div>
<div class="a ctext" style="left:887px;top:426px;width:144px;font-size:29px">number1</div>
<div class="a csel" style="left:400px;top:426px"><div class="st">Float</div><svg class="arr" width="22" height="12" viewBox="0 0 22 12"><path d="M1 1l10 10 10-10" fill="none" stroke="#c0c4cc" stroke-width="1.6"/></svg></div>
<div class="a csel" style="left:560px;top:426px"><div class="st">计数器</div><svg class="arr" width="22" height="12" viewBox="0 0 22 12"><path d="M1 1l10 10 10-10" fill="none" stroke="#c0c4cc" stroke-width="1.6"/></svg></div>
<div class="a cdis" style="left:1040px;top:427px;width:157px;height:54px"><span>FLOAT</span></div>
<div class="a cb on" style="left:1245px;top:435px"></div>
<div class="a cb" style="left:1365px;top:435px"></div>
<div class="a cb" style="left:1485px;top:435px"></div>
<div class="a ctext" style="left:1567px;top:426px;width:104px;font-size:29px">255</div>
<div class="a ctext" style="left:1687px;top:426px;width:104px;font-size:29px"></div>
<div class="a num" style="left:2px;top:484px;width:76px">7</div>
<div class="a ctext" style="left:87px;top:484px;width:144px;font-size:29px">number2</div>
<div class="a ctext" style="left:247px;top:484px;width:144px;font-size:27px"></div>
<div class="a ctext" style="left:727px;top:484px;width:144px;font-size:27px"></div>
<div class="a ctext" style="left:887px;top:484px;width:144px;font-size:29px">number2</div>
<div class="a csel" style="left:400px;top:484px"><div class="st">Float</div><svg class="arr" width="22" height="12" viewBox="0 0 22 12"><path d="M1 1l10 10 10-10" fill="none" stroke="#c0c4cc" stroke-width="1.6"/></svg></div>
<div class="a csel" style="left:560px;top:484px"><div class="st">计数器</div><svg class="arr" width="22" height="12" viewBox="0 0 22 12"><path d="M1 1l10 10 10-10" fill="none" stroke="#c0c4cc" stroke-width="1.6"/></svg></div>
<div class="a cdis" style="left:1040px;top:485px;width:157px;height:54px"><span>FLOAT</span></div>
<div class="a cb on" style="left:1245px;top:493px"></div>
<div class="a cb" style="left:1365px;top:493px"></div>
<div class="a cb" style="left:1485px;top:493px"></div>
<div class="a ctext" style="left:1567px;top:484px;width:104px;font-size:29px">255</div>
<div class="a ctext" style="left:1687px;top:484px;width:104px;font-size:29px"></div>
<div class="a num" style="left:2px;top:542px;width:76px">8</div>
<div class="a ctext" style="left:87px;top:542px;width:144px;font-size:29px">number3</div>
<div class="a ctext" style="left:247px;top:542px;width:144px;font-size:27px"></div>
<div class="a ctext" style="left:727px;top:542px;width:144px;font-size:27px"></div>
<div class="a ctext" style="left:887px;top:542px;width:144px;font-size:29px">number3</div>
<div class="a csel" style="left:400px;top:542px"><div class="st">String</div><svg class="arr" width="22" height="12" viewBox="0 0 22 12"><path d="M1 1l10 10 10-10" fill="none" stroke="#c0c4cc" stroke-width="1.6"/></svg></div>
<div class="a csel" style="left:560px;top:542px"><div class="st">金额</div><svg class="arr" width="22" height="12" viewBox="0 0 22 12"><path d="M1 1l10 10 10-10" fill="none" stroke="#c0c4cc" stroke-width="1.6"/></svg></div>
<div class="a cdis" style="left:1040px;top:543px;width:157px;height:54px"><span>VARCHAR</span></div>
<div class="a cb on" style="left:1245px;top:551px"></div>
<div class="a cb" style="left:1365px;top:551px"></div>
<div class="a cb" style="left:1485px;top:551px"></div>
<div class="a ctext" style="left:1567px;top:542px;width:104px;font-size:29px">255</div>
<div class="a ctext" style="left:1687px;top:542px;width:104px;font-size:29px"></div>
<div class="a hd" style="left:2px;top:0;width:76px;height:134px;line-height:124px">#</div>
<div class="a hd" style="left:80px;top:0;width:798px;height:66px;line-height:60px">实体属性</div>
<div class="a hd" style="left:880px;top:0;width:1038px;height:66px;line-height:60px">数据库属性</div>
<div class="a hd" style="left:80px;top:68px;width:158px;height:66px;line-height:58px">名称</div>
<div class="a hd" style="left:240px;top:68px;width:158px;height:66px;line-height:58px">显示名称</div>
<div class="a hd" style="left:400px;top:68px;width:158px;height:66px;line-height:58px">数据类型</div>
<div class="a hd" style="left:560px;top:68px;width:158px;height:66px;line-height:58px">显示控件</div>
<div class="a hd" style="left:720px;top:68px;width:158px;height:66px;line-height:58px">描述</div>
<div class="a hd" style="left:880px;top:68px;width:158px;height:66px;line-height:58px">列名</div>
<div class="a hd" style="left:1040px;top:68px;width:158px;height:66px;line-height:58px">列类型</div>
<div class="a hd" style="left:1200px;top:68px;width:118px;height:66px;line-height:58px">持久化</div>
<div class="a hd" style="left:1320px;top:68px;width:118px;height:66px;line-height:58px">主键</div>
<div class="a hd" style="left:1440px;top:68px;width:118px;height:66px;line-height:58px">必填</div>
<div class="a hd" style="left:1560px;top:68px;width:118px;height:66px;line-height:58px">长度</div>
<div class="a hd" style="left:1680px;top:68px;width:118px;height:66px;line-height:58px">精度</div>
<div class="a hd" style="left:1800px;top:68px;width:118px;height:66px;line-height:58px">默认值</div>
<div class="a tri" style="left:2px;top:542px"></div>
<div class="a tri" style="left:1200px;top:542px"></div>
<div class="a tri" style="left:1320px;top:542px"></div>
<div class="a tri" style="left:1440px;top:542px"></div>
<div class="a" style="left:80px;top:542px;width:14px;height:2px;background:#3aa05a"></div>
<div class="a" style="left:240px;top:542px;width:14px;height:2px;background:#3aa05a"></div>
<div class="a" style="left:560px;top:542px;width:14px;height:2px;background:#3aa05a"></div>
<div class="a" style="left:720px;top:542px;width:14px;height:2px;background:#3aa05a"></div>
<div class="a" style="left:880px;top:542px;width:14px;height:2px;background:#3aa05a"></div>
<div class="a" style="left:1040px;top:542px;width:14px;height:2px;background:#3aa05a"></div>
<div class="a" style="left:1560px;top:542px;width:14px;height:2px;background:#3aa05a"></div>
<div class="a" style="left:1680px;top:542px;width:14px;height:2px;background:#3aa05a"></div>
<div class="a" style="left:1800px;top:542px;width:14px;height:2px;background:#3aa05a"></div>
<div class="a gl" style="left:0px;top:0;width:2px;height:600px"></div>
<div class="a gl" style="left:78px;top:0;width:2px;height:600px"></div>
<div class="a gl" style="left:238px;top:66px;width:2px;height:534px"></div>
<div class="a gl" style="left:398px;top:66px;width:2px;height:534px"></div>
<div class="a gl" style="left:558px;top:66px;width:2px;height:534px"></div>
<div class="a gl" style="left:718px;top:66px;width:2px;height:534px"></div>
<div class="a gl" style="left:878px;top:0;width:2px;height:600px"></div>
<div class="a gl" style="left:1038px;top:66px;width:2px;height:534px"></div>
<div class="a gl" style="left:1198px;top:66px;width:2px;height:534px"></div>
<div class="a gl" style="left:1318px;top:66px;width:2px;height:534px"></div>
<div class="a gl" style="left:1438px;top:66px;width:2px;height:534px"></div>
<div class="a gl" style="left:1558px;top:66px;width:2px;height:534px"></div>
<div class="a gl" style="left:1678px;top:66px;width:2px;height:534px"></div>
<div class="a gl" style="left:1798px;top:66px;width:2px;height:534px"></div>
<div class="a gl" style="left:1878px;top:66px;width:2px;height:534px"></div>
<div class="a gl" style="left:0;top:0px;width:1880px;height:2px"></div>
<div class="a gl" style="left:0;top:134px;width:1880px;height:2px"></div>
<div class="a gl" style="left:0;top:192px;width:1880px;height:2px"></div>
<div class="a gl" style="left:0;top:250px;width:1880px;height:2px"></div>
<div class="a gl" style="left:0;top:308px;width:1880px;height:2px"></div>
<div class="a gl" style="left:0;top:366px;width:1880px;height:2px"></div>
<div class="a gl" style="left:0;top:424px;width:1880px;height:2px"></div>
<div class="a gl" style="left:0;top:482px;width:1880px;height:2px"></div>
<div class="a gl" style="left:0;top:540px;width:1880px;height:2px"></div>
<div class="a gl" style="left:0;top:598px;width:1880px;height:2px"></div>
<div class="a gl" style="left:78px;top:66px;width:1802px;height:2px"></div>
</div>
<div class="a" style="left:455px;top:970px;width:151px;height:73px;border:6px solid #e8432d;border-radius:11px"></div>
<div class="a flab2" style="left:61px;top:1060px">显示字段</div>
<div class="a fsel" style="left:181px;top:1052px"><span>请选择</span><svg class="a" style="left:287px;top:19px" width="22" height="12" viewBox="0 0 22 12"><path d="M1 1l10 10 10-10" fill="none" stroke="#c0c4cc" stroke-width="1.8"/></svg></div>
<div class="a btn" style="left:1667px;top:1185px">取消</div>
<div class="a btn pri" style="left:1808px;top:1185px">确定</div>
</div>
<!--AI-->
<div class="a" id="aibtn" style="left:2842px;top:1266px;width:140px;height:92px;border-radius:46px;background:#e7eaf3;border:2px solid #dfe8fb;box-shadow:0 2px 6px rgba(60,70,140,0.25)">
 <svg class="a" style="left:15px;top:13px" width="64" height="64" viewBox="0 0 64 64">
  <defs><linearGradient id="g1" x1="0" y1="0" x2="1" y2="1"><stop offset="0" stop-color="#b58ef0"/><stop offset="0.45" stop-color="#6a6ff0"/><stop offset="0.75" stop-color="#4d6ae8"/><stop offset="1" stop-color="#4cc0f0"/></linearGradient>
  <linearGradient id="g2" x1="1" y1="0" x2="0" y2="1"><stop offset="0" stop-color="#5ac8f0"/><stop offset="0.5" stop-color="#8a7cf0"/><stop offset="1" stop-color="#5a5ce8"/></linearGradient></defs>
  <circle cx="32" cy="32" r="27" fill="#eceefb" stroke="#e0e2ef" stroke-width="1"/>
  <circle cx="32" cy="32" r="29" fill="none" stroke="url(#g2)" stroke-width="3.6"/>
  <path d="M15.4 42.2L22.6 23.4Q23.2 22 25 22H29.4Q31 22 31.3 23.4L35.6 42.7H26.7L25.6 35.8L21.4 42.2Z" fill="#4f64e0"/>
  <path d="M38 30.3h6.6l-0.8 12.4h-6.6z" fill="#4f64e0"/>
  <circle cx="42.7" cy="23.7" r="3.6" fill="#4f64e0"/>
 </svg>
</div>
</body></html>
